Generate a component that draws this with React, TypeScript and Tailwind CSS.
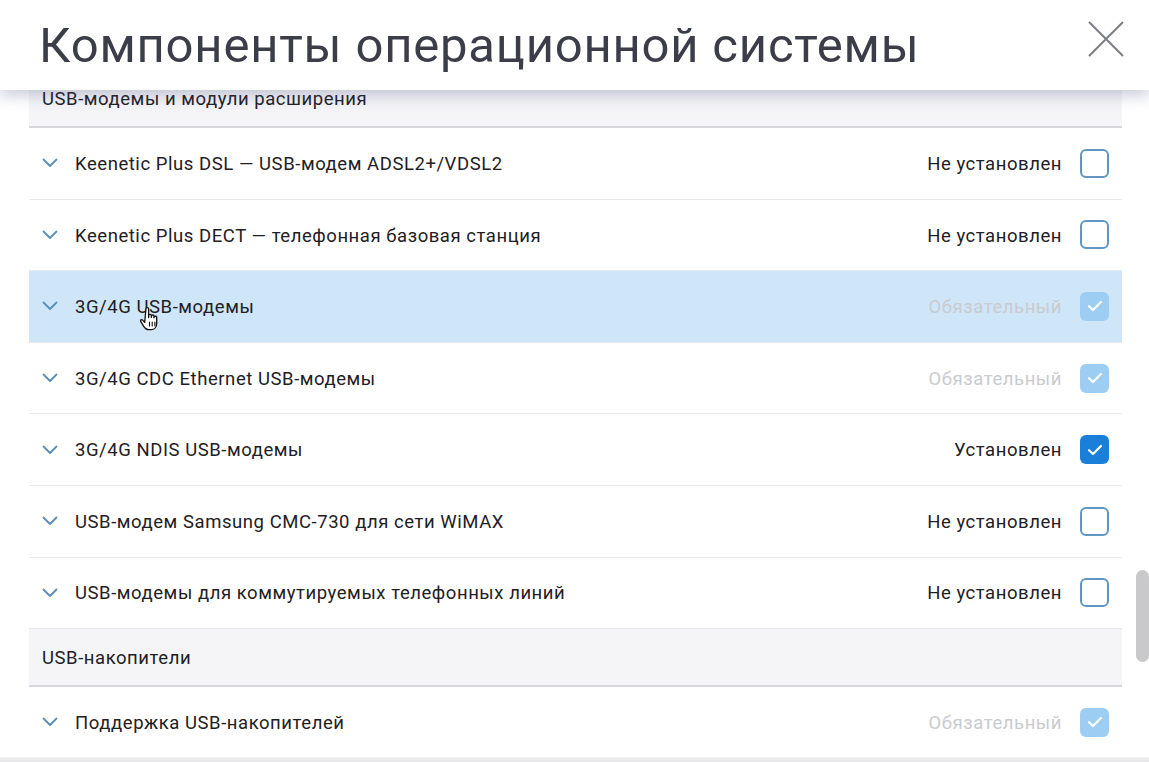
import React from "react";

type Status = "off" | "on" | "req";

interface Item {
    title: string;
    status: Status;
    active?: boolean;
}

const modems: Item[] = [
    { title: "Keenetic Plus DSL — USB-модем ADSL2+/VDSL2", status: "off" },
    { title: "Keenetic Plus DECT — телефонная базовая станция", status: "off" },
    { title: "3G/4G USB-модемы", status: "req", active: true },
    { title: "3G/4G CDC Ethernet USB-модемы", status: "req" },
    { title: "3G/4G NDIS USB-модемы", status: "on" },
    { title: "USB-модем Samsung CMC-730 для сети WiMAX", status: "off" },
    { title: "USB-модемы для коммутируемых телефонных линий", status: "off" },
];

const storage: Item[] = [{ title: "Поддержка USB-накопителей", status: "req" }];

const labels: Record<Status, string> = {
    off: "Не установлен",
    on: "Установлен",
    req: "Обязательный",
};

const Check = ({ status }: { status: Status }) => {
    if (status === "off") {
        return <div className="w-[29px] h-[29px] rounded-[6px] border-2 border-[#5f97c2] bg-white" />;
    }
    return (
        <div
            className={
                "w-[29px] h-[29px] rounded-[6px] flex items-center justify-center " +
                (status === "on" ? "bg-[#1a7fd8]" : "bg-[#9dcdf3]")
            }
        >
            <svg width="16" height="12" viewBox="0 0 16 12" fill="none">
                <path d="M2 6.2l4 3.8 8-8" stroke="white" strokeWidth="2.2" strokeLinecap="round" strokeLinejoin="round" />
            </svg>
        </div>
    );
};

const Chevron = () => (
    <svg width="16" height="10" viewBox="0 0 16 10" fill="none" className="shrink-0">
        <path d="M1.5 1.5l6.5 6.5 6.5-6.5" stroke="#5a8db8" strokeWidth="1.8" strokeLinecap="round" strokeLinejoin="round" />
    </svg>
);

const Row = ({ item }: { item: Item }) => (
    <div
        className={
            "h-[71.6px] flex items-center pl-[13px] pr-[13px] border-b border-[#e7e9ed] " +
            (item.active ? "bg-[#cfe5f8]" : "bg-white")
        }
    >
        <Chevron />
        <span className="ml-[17px] pt-[3px] flex-1 text-[18.5px] tracking-[0.55px] text-[#1f2023]">{item.title}</span>
        <span
            className={
                "text-[18.5px] pt-[3px] tracking-[0.55px] mr-[18px] " +
                (item.status === "req" ? "text-[#c9cbce]" : "text-[#1f2023]")
            }
        >
            {labels[item.status]}
        </span>
        <Check status={item.status} />
    </div>
);

const Section = ({ title }: { title: string }) => (
    <div className="h-[58px] flex items-center pt-[3px] px-[13px] bg-[#f5f5f7] border-b-2 border-[#d6d7db] text-[18.5px] tracking-[0.55px] text-[#1f2023]">
        {title}
    </div>
);

const HandCursor = () => (
    <svg width="22" height="26" viewBox="0 0 22 26" className="absolute left-[140px] top-[306px] z-20">
        <path
            d="M6 2.5c0-1.2 2.6-1.2 2.6 0v9l0.2-2.2c0-1.2 2.5-1.2 2.5 0v2l0.2-1.4c0-1.2 2.5-1.2 2.5 0v2l0.3-1c0-1.1 2.4-1.1 2.4 0v6.6c0 3.5-2.2 6.2-5.6 6.2h-2.6c-2.4 0-3.6-1.4-4.8-3.3l-3-5c-0.7-1.2 1.1-2.4 2-1.3l2 2.3z"
            fill="white"
            stroke="#111"
            strokeWidth="1.3"
            strokeLinejoin="round"
        />
        <path d="M9.5 16v4M12.2 16v4M14.9 16v4" stroke="#111" strokeWidth="1.1" strokeLinecap="round" />
    </svg>
);

export default function App() {
    return (
        <div
            className="relative w-[1149px] h-[762px] overflow-hidden bg-white"
            style={{ fontFamily: "Roboto, 'Noto Sans', sans-serif" }}
        >
            <header className="absolute top-0 left-0 right-0 h-[90px] z-10 bg-white flex items-center justify-between pl-[39px] pr-[24px] shadow-[0_6px_14px_rgba(70,80,130,0.28)]">
                <h1 className="text-[49px] tracking-[0.8px] leading-none text-[#3b3d48] mt-[1px]">Компоненты операционной системы</h1>
                <button className="w-[38px] h-[38px] -mt-[12px] flex items-center justify-center">
                    <svg width="38" height="38" viewBox="0 0 38 38">
                        <path d="M2 2l34 34M36 2L2 36" stroke="#7b7d83" strokeWidth="2" />
                    </svg>
                </button>
            </header>

            <HandCursor />

            <div className="flex h-full">
                <div className="ml-[29px] w-[1093px] mt-[70px]">
                    <Section title="USB-модемы и модули расширения" />
                    {modems.map((m) => (
                        <Row key={m.title} item={m} />
                    ))}
                    <Section title="USB-накопители" />
                    {storage.map((m) => (
                        <Row key={m.title} item={m} />
                    ))}
                </div>
                <div className="ml-[14px] w-[13px] mt-[570px] h-[92px] rounded-full bg-[#c9c9cb]" />
            </div>

            <div className="absolute left-0 right-0 bottom-0 h-[5px] bg-gradient-to-b from-[#f2f2f4] to-[#e4e4e6]" />
        </div>
    );
}
